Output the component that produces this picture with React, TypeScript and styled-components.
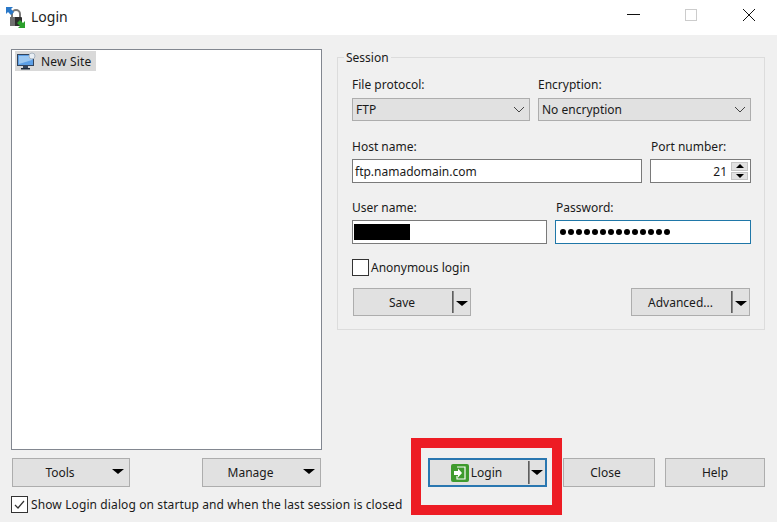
import styled, { createGlobalStyle } from "styled-components";

const GlobalStyle = createGlobalStyle`
html, body {
  margin: 0;
  padding: 0;
  background: #f0f0f0;
}
`;

const Window = styled.div`
width: 777px;
height: 522px;
overflow: hidden;
display: flex;
flex-flow: column nowrap;
background: #f0f0f0;
color: #1a1a1a;
font-family: "Noto Sans", "Open Sans", sans-serif;
font-size: 12px;
`;

const TitleBar = styled.div`
flex: 0 0 35px;
display: flex;
align-items: center;
background: #ffffff;
padding-left: 6px;
`;

const TitleText = styled.span`
font-size: 14px;
margin-left: 5px;
margin-top: -3px;
color: #222;
`;

const WindowButtons = styled.div`
margin-left: auto;
margin-right: -1px;
display: flex;
align-items: center;
`;

const WindowButton = styled.div`
width: 58px;
height: 30px;
margin-top: -5px;
display: flex;
align-items: center;
justify-content: center;
`;

const Main = styled.div`
flex: 1;
display: flex;
flex-flow: row nowrap;
`;

const LeftPane = styled.div`
width: 311px;
margin-left: 11px;
padding-top: 14px;
display: flex;
flex-flow: column nowrap;
`;

const SiteTree = styled.div`
height: 401px;
box-sizing: border-box;
background: #fff;
border: 1px solid #828790;
padding: 1px 3px;
`;

const SiteItem = styled.div`
width: 81px;
height: 20px;
display: flex;
align-items: center;
background: #d9d9d9;
padding-left: 2px;
box-sizing: border-box;
gap: 5px;
letter-spacing: 0.2px;
`;

const LeftButtons = styled.div`
display: flex;
justify-content: space-between;
margin-top: 8px;
padding-left: 1px;
padding-right: 1px;
`;

const BaseButton = styled.div<{ $w: number; $h?: number; $shift?: number }>`
width: ${(p) => p.$w}px;
height: ${(p) => p.$h ?? 29}px;
box-sizing: border-box;
background: #e1e1e1;
border: 1px solid #adadad;
display: flex;
align-items: center;
justify-content: center;
flex: none;
padding-right: ${(p) => p.$shift ?? 0}px;
`;

const MenuButton = styled(BaseButton)`
position: relative;
padding-right: 22px;
`;

const Caret = styled.span`
position: absolute;
top: 10px;
right: 5px;
width: 0;
height: 0;
border-left: 6px solid transparent;
border-right: 6px solid transparent;
border-top: 5px solid #000;
`;

const SplitButton = styled(BaseButton)<{ $focused?: boolean }>`
position: relative;
padding-right: 20px;
${(p) => p.$focused && "border: 2px solid #2a77b0;"}
`;

const SplitDivider = styled.span<{ $right: number; $inset: number }>`
position: absolute;
top: ${(p) => p.$inset}px;
bottom: ${(p) => p.$inset}px;
right: ${(p) => p.$right}px;
width: 1px;
background: #8a8a8a;
border-left: 1px solid #5f5f5f;
`;

const SplitCaret = styled.span<{ $top: number }>`
position: absolute;
top: ${(p) => p.$top}px;
right: 2px;
width: 0;
height: 0;
border-left: 6px solid transparent;
border-right: 6px solid transparent;
border-top: 5px solid #000;
`;

const CheckRow = styled.label<{ $top: number; $gap?: number; $spacing?: number }>`
display: flex;
align-items: center;
white-space: nowrap;
gap: ${(p) => p.$gap ?? 3}px;
margin-top: ${(p) => p.$top}px;
height: 17px;
letter-spacing: ${(p) => p.$spacing ?? 0}px;
`;

const CheckBox = styled.span`
width: 15px;
height: 15px;
background: #fff;
border: 1px solid #333;
display: flex;
align-items: center;
justify-content: center;
flex: none;
`;

const RightPane = styled.div`
flex: 1;
display: flex;
flex-flow: column nowrap;
margin-left: 15px;
margin-right: 12px;
padding-top: 22px;
`;

const SessionGroup = styled.fieldset`
margin: 0;
height: 273px;
box-sizing: border-box;
border: 1px solid #dcdcdc;
padding: 0 13px 0 14px;
position: relative;
display: flex;
flex-flow: column nowrap;
`;

const Legend = styled.span`
position: absolute;
top: -8px;
left: 6px;
padding: 0 2px;
line-height: 16px;
background: #f0f0f0;
`;

const FieldRow = styled.div<{ $top: number }>`
display: flex;
flex-flow: row nowrap;
gap: 8px;
margin-top: ${(p) => p.$top}px;
`;

const Field = styled.div<{ $w: number; $gap?: number }>`
width: ${(p) => p.$w}px;
flex: none;
display: flex;
flex-flow: column nowrap;
gap: ${(p) => p.$gap ?? 5}px;
`;

const FieldLabel = styled.div<{ $inset?: number }>`
line-height: 16px;
height: 16px;
padding-left: ${(p) => p.$inset ?? 0}px;
`;

const Select = styled.div`
height: 23px;
box-sizing: border-box;
background: #e1e1e1;
border: 1px solid #adadad;
display: flex;
align-items: center;
justify-content: space-between;
padding: 0 4px 0 2px;
`;

const SelectText = styled.span`
margin-left: 1px;
`;

const Input = styled.div<{ $focused?: boolean }>`
height: 24px;
box-sizing: border-box;
background: #fff;
border: 1px solid ${(p) => (p.$focused ? "#1f77a8" : "#7a7a7a")};
display: flex;
align-items: center;
padding: 0 2px;
position: relative;
`;

const PortValue = styled.span`
margin-left: auto;
margin-right: 21px;
`;

const Spinner = styled.div`
position: absolute;
right: 2px;
top: 2px;
bottom: 2px;
width: 17px;
display: flex;
flex-flow: column nowrap;
gap: 1px;
`;

const SpinPart = styled.div<{ $up?: boolean }>`
flex: 1;
background: #e1e1e1;
border: 1px solid #c4c4c4;
display: flex;
align-items: center;
justify-content: center;
&::before {
  content: "";
  border-left: 4px solid transparent;
  border-right: 4px solid transparent;
  ${(p) => (p.$up ? "border-bottom: 4px solid #000;" : "border-top: 4px solid #000;")}
}
`;

const RedactedName = styled.div`
width: 56px;
height: 16px;
margin-left: -1px;
background: #000;
`;

const PasswordDots = styled.div`
display: flex;
gap: 2px;
margin-left: 2px;
`;

const Dot = styled.span`
width: 6px;
height: 6px;
border-radius: 50%;
background: #000;
`;

const SessionButtons = styled.div`
display: flex;
justify-content: space-between;
margin-top: 12px;
padding-left: 1px;
padding-right: 1px;
`;

const BottomButtons = styled.div`
margin-top: 128px;
display: flex;
flex-flow: row nowrap;
gap: 10px;
margin-left: 91px;
`;

const LoginWrap = styled.div`
position: relative;
margin-right: 6px;
display: flex;
`;

const RedBox = styled.div`
position: absolute;
left: -17px;
right: -15px;
top: -20px;
bottom: -28px;
border: 10px solid #ed1c24;
pointer-events: none;
`;

const LoginIcon = styled.svg`
margin-right: 2px;
margin-left: -2px;
`;

function AppLockIcon() {
  return (
    <svg width="20" height="22" viewBox="0 0 20 22">
      <path d="M6 11V7a4 4 0 0 1 8 0v4" fill="none" stroke="#777" strokeWidth="2" />
      <rect x="4" y="10" width="12" height="9" rx="1" fill="#2e2e2e" />
      <rect x="4" y="10" width="5" height="9" fill="#6f6f6f" />
      <path d="M0 0h7L5 2l3 3-3 3-3-3-2 2z" fill="#2a78c8" />
      <path d="M19 21h-7l2-2-3-3 3-3 3 3 2-2z" fill="#2ca02c" />
    </svg>
  );
}

function SiteIcon() {
  return (
    <svg width="19" height="18" viewBox="0 0 19 18">
      <rect x="0.5" y="2.5" width="16" height="11" fill="#5c9fe6" stroke="#33445c" />
      <path d="M2 4h13v4L2 12z" fill="#9cc8f2" />
      <rect x="6" y="14" width="5" height="2" fill="#33445c" />
      <rect x="4" y="16" width="9" height="1.5" fill="#1d2b3d" />
      <circle cx="15" cy="4" r="3" fill="#e8eef4" stroke="#a8b4c0" />
    </svg>
  );
}

function ChevronIcon() {
  return (
    <svg width="12" height="7" viewBox="0 0 12 7">
      <path d="M1 1l5 5 5-5" fill="none" stroke="#444" />
    </svg>
  );
}

export default function App() {
  return (
    <Window>
      <GlobalStyle />
      <TitleBar>
        <AppLockIcon />
        <TitleText>Login</TitleText>
        <WindowButtons>
          <WindowButton>
            <svg width="13" height="2" viewBox="0 0 13 2"><rect width="13" height="1" fill="#111" /></svg>
          </WindowButton>
          <WindowButton>
            <svg width="12" height="12" viewBox="0 0 12 12"><rect x="0.5" y="0.5" width="11" height="11" fill="none" stroke="#ccc" /></svg>
          </WindowButton>
          <WindowButton>
            <svg width="14" height="14" viewBox="0 0 14 14"><path d="M1 1l12 12M13 1L1 13" stroke="#111" fill="none" /></svg>
          </WindowButton>
        </WindowButtons>
      </TitleBar>
      <Main>
        <LeftPane>
          <SiteTree>
            <SiteItem>
              <SiteIcon />
              <span>New Site</span>
            </SiteItem>
          </SiteTree>
          <LeftButtons>
            <MenuButton $w={118}>
              Tools
              <Caret />
            </MenuButton>
            <MenuButton $w={119}>
              Manage
              <Caret />
            </MenuButton>
          </LeftButtons>
          <CheckRow $top={9} $spacing={0.11}>
            <CheckBox>
              <svg width="13" height="13" viewBox="0 0 13 13">
                <path d="M2 7l3 3 6-7" fill="none" stroke="#333" strokeWidth="1.2" />
              </svg>
            </CheckBox>
            Show Login dialog on startup and when the last session is closed
          </CheckRow>
        </LeftPane>
        <RightPane>
          <SessionGroup>
            <Legend>Session</Legend>
            <FieldRow $top={19}>
              <Field $w={178}>
                <FieldLabel>File protocol:</FieldLabel>
                <Select>
                  <SelectText>FTP</SelectText>
                  <ChevronIcon />
                </Select>
              </Field>
              <Field $w={213}>
                <FieldLabel>Encryption:</FieldLabel>
                <Select>
                  <SelectText>No encryption</SelectText>
                  <ChevronIcon />
                </Select>
              </Field>
            </FieldRow>
            <FieldRow $top={18}>
              <Field $w={290} $gap={4}>
                <FieldLabel>Host name:</FieldLabel>
                <Input>ftp.namadomain.com</Input>
              </Field>
              <Field $w={101} $gap={4}>
                <FieldLabel $inset={1}>Port number:</FieldLabel>
                <Input>
                  <PortValue>21</PortValue>
                  <Spinner>
                    <SpinPart $up />
                    <SpinPart />
                  </Spinner>
                </Input>
              </Field>
            </FieldRow>
            <FieldRow $top={17}>
              <Field $w={195} $gap={4}>
                <FieldLabel>User name:</FieldLabel>
                <Input><RedactedName /></Input>
              </Field>
              <Field $w={196} $gap={4}>
                <FieldLabel $inset={1}>Password:</FieldLabel>
                <Input $focused>
                  <PasswordDots>
                    {Array.from({ length: 14 }).map((_, i) => <Dot key={i} />)}
                  </PasswordDots>
                </Input>
              </Field>
            </FieldRow>
            <CheckRow $top={15} $gap={2}>
              <CheckBox />
              Anonymous login
            </CheckRow>
            <SessionButtons>
              <SplitButton $w={118} $h={28}>
                Save
                <SplitDivider $right={16} $inset={2} />
                <SplitCaret $top={12} />
              </SplitButton>
              <SplitButton $w={119} $h={28}>
                Advanced...
                <SplitDivider $right={16} $inset={2} />
                <SplitCaret $top={12} />
              </SplitButton>
            </SessionButtons>
          </SessionGroup>
          <BottomButtons>
            <LoginWrap>
              <SplitButton $w={119} $focused>
                <LoginIcon width="18" height="18" viewBox="0 0 18 18">
                  <rect width="18" height="18" rx="2" fill="#3f9b2e" />
                  <path d="M6 3h8v12H6v-3" fill="none" stroke="#fff" strokeWidth="1.2" />
                  <path d="M3 7h4V4.500L11 9l-4 4.500V11H3z" fill="#fff" />
                </LoginIcon>
                Login
                <SplitDivider $right={15} $inset={1} />
                <SplitCaret $top={10} />
              </SplitButton>
              <RedBox />
            </LoginWrap>
            <BaseButton $w={92} $shift={7}>Close</BaseButton>
            <BaseButton $w={100}>Help</BaseButton>
          </BottomButtons>
        </RightPane>
      </Main>
    </Window>
  );
}
